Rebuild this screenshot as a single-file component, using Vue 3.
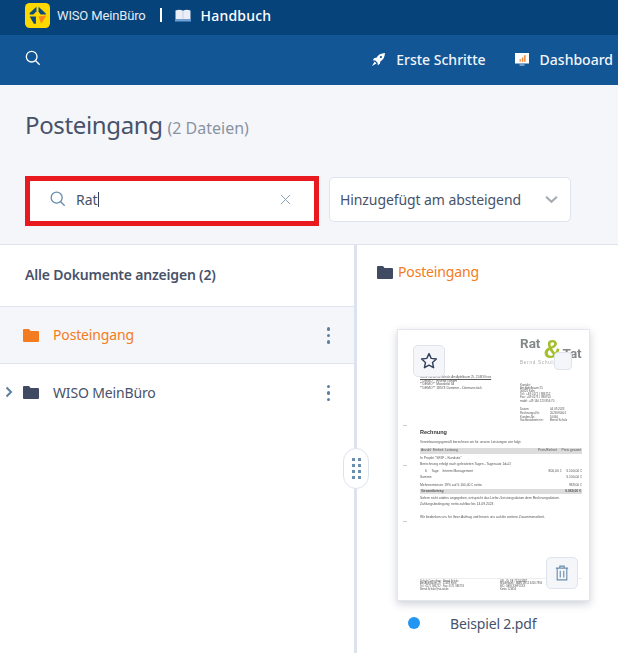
<script setup>
const rows = [
  { name: 'Posteingang', active: true, arrow: false },
  { name: 'WISO MeinBüro', active: false, arrow: true },
]
const sender = ['**DEMO** Eisenb GmbH', '**DEMO** Moosfeld 34', '**DEMO** 18573 Dommer - Dörmanstück']
const contact = ['Kontakt:', 'Am Apfelbaum 25', '50825 Köln', 'Tel.: +49 0171 / 986752', 'Fax: +49 0171 / 986753', 'mobil: +49 160 123 856 70']
const meta = [
  ['Datum:', '04.09.2023'],
  ['Rechnungs-Nr.:', '2023090001'],
  ['Kunden-Nr.:', '10060'],
  ['Sachbearbeiter:in:', 'Bernd Schulz'],
]
</script>

<template>
  <div class="app">
    <header class="topbar">
      <svg class="logo" viewBox="0 0 24 24">
        <rect width="24" height="24" rx="4.5" fill="#ffd800" />
        <path d="M11 3.5 L11 8 L8 11 L4.5 11 L4.5 9.5 Z" fill="#0c4a80" />
        <path d="M13 3.5 L20 10 L20 11 L15 11 L13 8.5 Z" fill="#0c4a80" />
        <path d="M4.5 13 L10.5 13 L10.5 20 L8.5 20 Z" fill="#0c4a80" />
        <path d="M13 13 L20.5 12 L15.5 20 L14.2 16 Z" fill="#f6871f" />
      </svg>
      <span class="brand">WISO MeinBüro</span>
      <span class="sep"></span>
      <svg class="book" viewBox="0 0 16 13">
        <path d="M0.5 1.5 C3 0.5 6 0.5 8 1.7 C10 0.5 13 0.5 15.5 1.5 L15.5 10.5 L0.5 10.5 Z" fill="#e9eef7" />
        <path d="M8 1.7 V10.5" stroke="#c5d3e6" stroke-width="1" />
        <path d="M0 10.5 H16 V12.5 H0 Z" fill="#6da3d8" />
      </svg>
      <span class="manual">Handbuch</span>
    </header>

    <nav class="navbar">
      <svg class="nav-search" viewBox="0 0 18 18">
        <circle cx="7.5" cy="7.5" r="6" fill="none" stroke="#fff" stroke-width="1.5" />
        <path d="M12 12 L16.5 16.5" stroke="#fff" stroke-width="1.5" />
      </svg>
      <div class="nav-links">
        <a class="nav-link">
          <svg class="rocket" viewBox="0 0 14 14">
            <path d="M14 0 C9.5 0.2 6.8 2 4.8 5 L2.5 5.5 L0.8 7.8 L3.6 8 L6 10.4 L6.2 13.2 L8.5 11.5 L9 9.2 C12 7.2 13.8 4.5 14 0 Z" fill="#fff" />
            <path d="M2.8 9.2 L0 14 L4.8 11.2 Z" fill="#fff" />
            <circle cx="9.6" cy="4.4" r="1.2" fill="#125696" />
          </svg>
          Erste Schritte
        </a>
        <a class="nav-link">
          <svg class="monitor" viewBox="0 0 14 14">
            <rect x="0" y="0" width="14" height="10.5" fill="#fff" />
            <rect x="4.5" y="11" width="5" height="2" fill="#6f9bc6" />
            <rect x="4.5" y="6" width="1.5" height="2.8" fill="#f5a46a" />
            <rect x="6.8" y="4.5" width="1.5" height="4.3" fill="#f08a3c" />
            <rect x="9.1" y="2.2" width="1.5" height="6.6" fill="#f08a3c" />
          </svg>
          Dashboard
        </a>
      </div>
    </nav>

    <section class="head">
      <h1 class="title">Posteingang <small>(2 Dateien)</small></h1>
      <div class="filters">
        <div class="search">
          <svg class="search-icon" viewBox="0 0 18 18">
            <circle cx="7.5" cy="7.5" r="6.2" fill="none" stroke="#6a8eae" stroke-width="1.5" />
            <path d="M12 12 L16.5 16.5" stroke="#6a8eae" stroke-width="1.5" />
          </svg>
          <span class="query">Rat</span><span class="caret"></span>
          <svg class="clear" viewBox="0 0 12 12">
            <path d="M1 1 L11 11 M11 1 L1 11" stroke="#7f9cb6" stroke-width="1" fill="none" />
          </svg>
        </div>
        <div class="select">
          <span>Hinzugefügt am absteigend</span>
          <svg class="chevron" viewBox="0 0 12 8">
            <path d="M1 1.5 L6 6.2 L11 1.5" stroke="#a6abb2" stroke-width="2" fill="none" />
          </svg>
        </div>
      </div>
    </section>

    <main class="content">
      <aside class="tree">
        <div class="tree-head">Alle Dokumente anzeigen (2)</div>
        <div v-for="row in rows" :key="row.name" class="tree-row" :class="{ active: row.active }">
          <svg v-if="row.arrow" class="arrow" viewBox="0 0 8 12">
            <path d="M1.5 1.5 L6 6 L1.5 10.5" stroke="#5d7f9f" stroke-width="2" fill="none" />
          </svg>
          <svg class="folder" viewBox="0 0 16 14">
            <path d="M0 2 Q0 1 1 1 L6 1 L7.5 3 L15 3 Q16 3 16 4 L16 13 Q16 14 15 14 L1 14 Q0 14 0 13 Z" />
          </svg>
          <span class="row-name">{{ row.name }}</span>
          <span class="dots"><i></i><i></i><i></i></span>
        </div>
      </aside>

      <div class="divider">
        <div class="handle">
          <i v-for="n in 8" :key="n"></i>
        </div>
      </div>

      <section class="files">
        <div class="crumb">
          <svg class="folder small" viewBox="0 0 16 14">
            <path d="M0 2 Q0 1 1 1 L6 1 L7.5 3 L15 3 Q16 3 16 4 L16 13 Q16 14 15 14 L1 14 Q0 14 0 13 Z" />
          </svg>
          <span>Posteingang</span>
        </div>

        <div class="doc">
          <div class="paper">
            <div class="doc-top">
              <div class="doc-left">
                <div class="doc-sender">Rat &amp; Tat/Bernd Schulz, Am Apfelbaum 25, 21483 Kreis</div>
                <div v-for="line in sender" :key="line">{{ line }}</div>
              </div>
              <div class="doc-right">
                <div class="doc-logo"><span>Rat</span><b>&amp;</b><span class="tat">Tat</span></div>
                <div class="doc-sub">Bernd Schulz</div>
                <div class="doc-contact">
                  <div v-for="line in contact" :key="line">{{ line }}</div>
                </div>
                <div class="doc-meta">
                  <div v-for="m in meta" :key="m[0]" class="meta-row"><span>{{ m[0] }}</span><span>{{ m[1] }}</span></div>
                </div>
              </div>
            </div>
            <div class="doc-title">Rechnung</div>
            <div class="doc-line intro">Vereinbarungsgemäß berechnen wir für unsere Leistungen wie folgt:</div>
            <div class="band"><span>Anzahl &nbsp;Einheit &nbsp;Leistung</span><span>Preis/Einheit &nbsp; &nbsp; Preis gesamt</span></div>
            <div class="doc-line">In Projekt "SF2F - Kundsite"</div>
            <div class="doc-line">Berechnung erfolgt nach geleisteten Tagen - Tagessatz 1d=1l</div>
            <div class="doc-line split indent"><span>6 &nbsp; &nbsp; Tage &nbsp; &nbsp;Interim Management</span><span>800,00 € &nbsp; &nbsp; 5.100,00 €</span></div>
            <div class="doc-line split"><span>Summe</span><span>5.100,00 €</span></div>
            <div class="doc-line split tax"><span>Mehrwertsteuer 19% auf 5.100,00 € netto</span><span>969,00 €</span></div>
            <div class="band total"><span>Gesamtbetrag</span><span>6.069,00 €</span></div>
            <div class="doc-line">Sofern nicht anders angegeben, entspricht das Liefer-/Leistungsdatum dem Rechnungsdatum.</div>
            <div class="doc-line">Zahlungsbedingung: netto zahlbar bis 14.09.2023</div>
            <div class="doc-line thanks">Wir bedanken uns für Ihren Auftrag und freuen uns auf die weitere Zusammenarbeit.</div>
            <div class="doc-foot">
              <div class="foot-col">Schulz Consulting · Bernd Schulz<br />Am Apfelbaum 25 · 21483 Kreis<br />Tel.: 0171 986752 · Fax: 0171 986753<br />Bernd.Schulz@rat-tat.de</div>
              <div>USt.-ID: DE 771543887<br />Musterbank · IBAN DE12 3456 7890<br />BIC: GENODEF1XXX<br />Konto 123456</div>
            </div>
            <i class="fold f1"></i>
            <i class="fold f2"></i>
            <i class="fold f3"></i>
          </div>

          <button class="tool star">
            <svg viewBox="0 0 18 18">
              <path d="M9 1.6 L11.2 6.4 L16.4 7 L12.5 10.5 L13.6 15.7 L9 13.1 L4.4 15.7 L5.5 10.5 L1.6 7 L6.8 6.4 Z" fill="none" stroke="#33415c" stroke-width="1.4" stroke-linejoin="round" />
            </svg>
          </button>
          <span class="check"></span>
          <button class="tool trash">
            <svg viewBox="0 0 16 18">
              <path d="M1 3.5 H15 M5.5 3.5 V1.2 H10.5 V3.5 M2.5 3.5 V16.8 H13.5 V3.5 M6 6.5 V14 M10 6.5 V14" fill="none" stroke="#6a8eae" stroke-width="1.3" />
            </svg>
          </button>
        </div>

        <div class="file-row">
          <span class="status"></span>
          <span class="file-name">Beispiel 2.pdf</span>
        </div>
      </section>
    </main>
  </div>
</template>

<style>
html, body {
  margin: 0;
  background: #fff;
}
</style>

<style scoped>
.app {
  width: 618px;
  height: 653px;
  overflow: hidden;
  display: flex;
  flex-direction: column;
  font-family: "Noto Sans", "Open Sans", sans-serif;
  color: #3e4a63;
}

.topbar {
  height: 35px;
  flex: none;
  box-sizing: border-box;
  padding: 0 0 5px 25px;
  background: #06437a;
  display: flex;
  align-items: center;
  color: #fff;
}
.logo {
  width: 25px;
  height: 25px;
  margin-right: 7px;
}
.brand {
  font-family: Roboto, sans-serif;
  font-size: 13px;
  letter-spacing: -0.15px;
  color: #e4ebf3;
}
.sep {
  width: 2px;
  height: 14px;
  background: #fff;
  margin: 0 13px 0 14px;
}
.book {
  width: 16px;
  height: 13px;
  margin-right: 10px;
}
.manual {
  font-size: 14px;
  font-weight: 500;
  letter-spacing: 0.2px;
}

.navbar {
  height: 50px;
  flex: none;
  box-sizing: border-box;
  background: #125696;
  padding: 0 5px 0 25px;
  display: flex;
  align-items: flex-start;
  justify-content: space-between;
  color: #f1f5fa;
}
.nav-search {
  width: 16px;
  height: 16px;
  margin-top: 15px;
}
.nav-links {
  display: flex;
  gap: 29px;
  margin-top: 15px;
}
.nav-link {
  display: flex;
  align-items: center;
  gap: 11px;
  font-size: 14px;
  font-weight: 500;
  line-height: 19px;
}
.rocket {
  width: 13px;
  height: 13px;
}
.monitor {
  width: 14px;
  height: 14px;
}

.head {
  height: 160px;
  flex: none;
  box-sizing: border-box;
  background: #f5f6fa;
  border-bottom: 1px solid #dfe3ec;
  padding: 24px 0 0 25px;
}
.title {
  margin: 0;
  height: 32px;
  font-size: 24px;
  font-weight: 400;
  line-height: 32px;
  letter-spacing: -0.36px;
  color: #47526a;
}
.title small {
  font-size: 16px;
  letter-spacing: 0;
  color: #8a93a3;
  margin-left: -1px;
}
.filters {
  display: flex;
  align-items: flex-start;
  gap: 10px;
  margin-top: 35px;
}
.search {
  width: 294px;
  height: 50px;
  box-sizing: border-box;
  border: 5px solid #e8191f;
  background: #fff;
  display: flex;
  align-items: center;
  padding: 0 23px 4px 20px;
}
.search-icon {
  width: 16px;
  height: 16px;
  margin-right: 10px;
}
.query {
  font-size: 14px;
  color: #47526a;
}
.caret {
  width: 1px;
  height: 15px;
  background: #33415c;
}
.clear {
  width: 11px;
  height: 11px;
  margin-left: auto;
}
.select {
  width: 242px;
  height: 45px;
  margin-top: 1px;
  box-sizing: border-box;
  background: #fff;
  border: 1px solid #dfe3ee;
  border-radius: 5px;
  padding: 0 12px 0 10px;
  display: flex;
  align-items: center;
  justify-content: space-between;
  font-size: 14px;
  letter-spacing: -0.09px;
  color: #47526a;
}
.chevron {
  width: 13px;
  height: 9px;
}

.content {
  flex: 1;
  display: flex;
  min-height: 0;
}
.tree {
  width: 354px;
  flex: none;
}
.tree-head {
  height: 61px;
  box-sizing: border-box;
  padding: 18px 0 0 25px;
  font-size: 14px;
  font-weight: 600;
  line-height: 24px;
  letter-spacing: -0.2px;
  color: #47526a;
}
.tree-row {
  height: 57px;
  box-sizing: border-box;
  position: relative;
  display: flex;
  align-items: center;
  padding-left: 23px;
  padding-bottom: 1px;
  font-size: 14px;
  letter-spacing: -0.15px;
  color: #47526a;
}
.tree-row.active {
  height: 58px;
  background: #f5f6fa;
  color: #f47c20;
  border-top: 1px solid #dfe3ec;
  border-bottom: 1px solid #dfe3ec;
}
.folder {
  width: 16px;
  height: 14px;
  fill: #404a62;
  flex: none;
}
.active .folder {
  fill: #f47c20;
}
.folder.small {
  margin-right: 5px;
}
.arrow {
  position: absolute;
  left: 5px;
  width: 8px;
  height: 12px;
}
.row-name {
  margin-left: 14px;
}
.dots {
  position: absolute;
  right: 24px;
  top: 50%;
  margin-top: -8px;
  display: flex;
  flex-direction: column;
  gap: 3px;
}
.dots i {
  width: 3.5px;
  height: 3.5px;
  border-radius: 50%;
  background: #5d7f9f;
}

.divider {
  width: 3px;
  flex: none;
  background: #dde3ee;
  position: relative;
}
.handle {
  position: absolute;
  left: -11px;
  top: 203px;
  width: 26px;
  height: 41px;
  box-sizing: border-box;
  background: #fff;
  border: 1px solid #dde3ee;
  border-radius: 13px;
  display: grid;
  grid-template-columns: 3px 3px;
  grid-auto-rows: 3px;
  gap: 3px;
  justify-content: center;
  align-content: center;
}
.handle i {
  background: #6a8eae;
}

.files {
  flex: 1;
  padding: 0 0 0 20px;
}
.crumb {
  display: flex;
  align-items: center;
  height: 19px;
  margin-top: 17px;
  font-size: 14px;
  letter-spacing: -0.15px;
  color: #f47c20;
}
.doc {
  position: relative;
  width: 193px;
  height: 272px;
  margin: 48px 0 0 20px;
  box-sizing: border-box;
  background: #fff;
  border: 1px solid #e3e6ee;
  box-shadow: 0 3px 8px rgba(60, 70, 100, 0.25);
}
.paper {
  position: relative;
  height: 100%;
  box-sizing: border-box;
  padding: 7px 7px 0 22px;
  font-family: "Liberation Sans", sans-serif;
  font-size: 3.35px;
  line-height: 5.9px;
  color: #555;
  overflow: hidden;
  filter: blur(0.3px);
}
.doc-top {
  display: flex;
  justify-content: space-between;
}
.doc-left {
  padding-top: 38px;
}
.doc-sender {
  text-decoration: underline;
  font-size: 2.9px;
  line-height: 4.5px;
}
.doc-left div:not(.doc-sender) {
  line-height: 3.6px;
}
.doc-right {
  width: 62px;
}
.doc-logo {
  display: flex;
  align-items: flex-start;
  height: 21.5px;
  font-family: Roboto, sans-serif;
  font-size: 13.5px;
  line-height: 12px;
  font-weight: 700;
  color: #85888a;
}
.doc-logo b {
  font-family: "Liberation Sans", sans-serif;
  font-size: 25px;
  line-height: 20px;
  color: #a3bf2d;
  margin: 1.5px 1px 0 3px;
}
.doc-logo .tat {
  margin-top: 10px;
}
.doc-sub {
  font-size: 4.5px;
  line-height: 7px;
  letter-spacing: 0.8px;
  color: #aaa;
  margin-bottom: 18px;
  white-space: nowrap;
}
.doc-contact {
  font-size: 2.9px;
  line-height: 3.2px;
  margin-bottom: 5.5px;
}
.doc-meta {
  font-size: 2.9px;
  line-height: 3.7px;
}
.meta-row {
  display: flex;
}
.meta-row span:first-child {
  width: 30px;
}
.doc-title {
  font-size: 5.5px;
  line-height: 8px;
  font-weight: 700;
  color: #333;
  margin-top: 5px;
}
.doc-line {
  line-height: 6.5px;
}
.intro {
  margin-top: 2.75px;
}
.split,
.band {
  display: flex;
  justify-content: space-between;
}
.indent {
  padding-left: 5px;
}
.band {
  background: #dcdcdc;
  line-height: 5.5px;
  margin: 3px 0 1px;
  padding: 0 1px;
}
.total {
  font-weight: 700;
  margin: 0 0 0.5px;
}
.tax {
  margin-top: 1.5px;
}
.thanks {
  margin-top: 6.5px;
}
.doc-foot {
  position: absolute;
  left: 22px;
  right: 7px;
  top: 248px;
  display: flex;
  border-top: 0.5px solid #eee;
  padding-top: 1.5px;
  font-size: 2.6px;
  line-height: 2.8px;
}
.foot-col {
  width: 80px;
}
.fold {
  position: absolute;
  left: 5px;
  width: 4px;
  height: 1px;
  background: #ccc;
}
.f1 { top: 95px; }
.f2 { top: 135px; }
.f3 { top: 191px; }

.tool {
  position: absolute;
  width: 32px;
  height: 32px;
  padding: 0;
  box-sizing: border-box;
  background: #f5f6fa;
  border: 1px solid #dfe3ee;
  border-radius: 5px;
  display: flex;
  align-items: center;
  justify-content: center;
}
.star {
  left: 15px;
  top: 15px;
}
.star svg {
  width: 18px;
  height: 18px;
}
.trash {
  right: 11px;
  bottom: 11px;
}
.trash svg {
  width: 14px;
  height: 16px;
}
.check {
  position: absolute;
  left: 156px;
  top: 22px;
  width: 18px;
  height: 18px;
  box-sizing: border-box;
  background: #f5f6fa;
  border: 1px solid #dfe3ee;
  border-radius: 4px;
}

.file-row {
  display: flex;
  align-items: center;
  margin: 11px 0 0 31px;
  height: 22px;
}
.status {
  width: 12px;
  height: 12px;
  border-radius: 50%;
  background: #2196f3;
}
.file-name {
  margin-left: 30px;
  font-size: 14px;
  letter-spacing: -0.15px;
  color: #47526a;
}
</style>
